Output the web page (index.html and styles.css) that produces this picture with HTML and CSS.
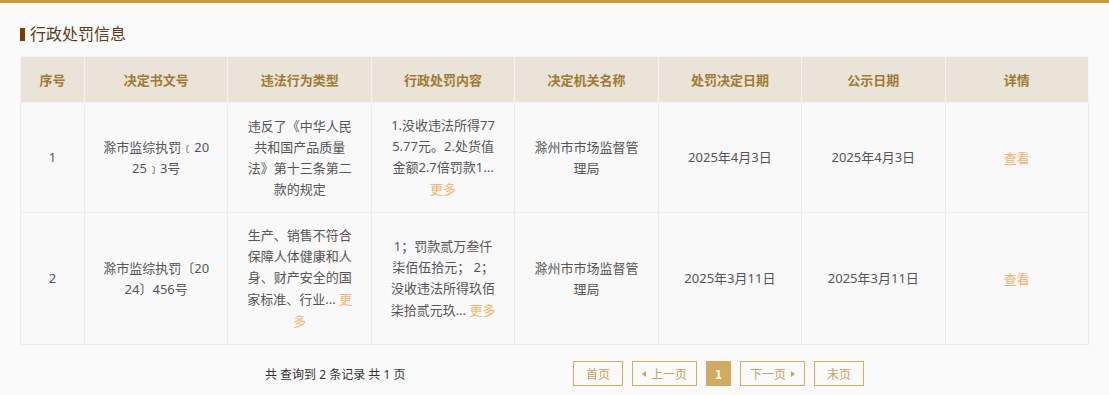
FILE: index.html
```html
<!DOCTYPE html>
<html lang="zh-CN">
<head>
<meta charset="utf-8">
<title>行政处罚信息</title>
<link rel="stylesheet" href="styles.css">
</head>
<body>
<div class="page">
  <h2 class="section-title"><span class="marker"></span>行政处罚信息</h2>
  <table class="grid">
    <colgroup>
      <col class="c-no">
      <col class="c-std"><col class="c-std"><col class="c-std"><col class="c-std"><col class="c-std"><col class="c-std"><col class="c-std">
    </colgroup>
    <thead>
      <tr>
        <th>序号</th>
        <th>决定书文号</th>
        <th>违法行为类型</th>
        <th>行政处罚内容</th>
        <th>决定机关名称</th>
        <th>处罚决定日期</th>
        <th>公示日期</th>
        <th>详情</th>
      </tr>
    </thead>
    <tbody>
      <tr>
        <td>1</td>
        <td>滁市监综执罚﹝2025﹞3号</td>
        <td>违反了《中华人民共和国产品质量法》第十三条第二款的规定</td>
        <td>1.没收违法所得775.77元。2.处货值金额2.7倍罚款1... <a class="more" href="#">更多</a></td>
        <td>滁州市市场监督管理局</td>
        <td>2025年4月3日</td>
        <td>2025年4月3日</td>
        <td><a class="more" href="#">查看</a></td>
      </tr>
      <tr>
        <td>2</td>
        <td>滁市监综执罚〔2024〕456号</td>
        <td>生产、销售不符合保障人体健康和人身、财产安全的国家标准、行业... <a class="more" href="#">更多</a></td>
        <td>1；罚款贰万叁仟柒佰伍拾元； 2；没收违法所得玖佰柒拾贰元玖... <a class="more" href="#">更多</a></td>
        <td>滁州市市场监督管理局</td>
        <td>2025年3月11日</td>
        <td>2025年3月11日</td>
        <td><a class="more" href="#">查看</a></td>
      </tr>
    </tbody>
  </table>
  <div class="pager">
    <div class="summary">共 查询到 2 条记录 共 1 页</div>
    <div class="pages">
      <a class="pbtn w49" href="#">首页</a>
      <a class="pbtn w65" href="#"><span class="tri-l"></span>上一页</a>
      <span class="pbtn current">1</span>
      <a class="pbtn w65" href="#">下一页<span class="tri-r"></span></a>
      <a class="pbtn w49" href="#">末页</a>
    </div>
  </div>
</div>
</body>
</html>
```

FILE: styles.css
```css
html, body {
  margin: 0;
  padding: 0;
  background: #fafafa;
}
body {
  font-family: "Noto Sans", "Noto Sans CJK SC", sans-serif;
  color: #555;
  border-top: 3px solid #c99b3f;
}
.page {
  padding: 0 20px;
}
.section-title {
  margin: 0;
  padding-top: 19px;
  height: 24px;
  line-height: 24px;
  font-size: 16px;
  font-weight: normal;
  color: #5a3a18;
  display: flex;
  align-items: center;
  gap: 5px;
  margin-bottom: 10px;
}
.marker {
  display: inline-block;
  width: 5px;
  height: 13px;
  background: #7a3c02;
}
.grid {
  width: 100%;
  border-collapse: collapse;
  table-layout: fixed;
  font-size: 13px;
}
.c-no { width: 64px; }
.grid th, .grid td {
  border: 1px solid #ebebeb;
  text-align: center;
  vertical-align: middle;
  line-height: 21px;
}
.grid th {
  background: #e9e3d8;
  color: #a07a32;
  font-weight: bold;
  padding: 12px 10px;
  border-color: #f3f3f3;
  font-family: "Noto Sans CJK SC", sans-serif;
}
.grid td {
  padding: 12px 18px;
  color: #555;
  background: #f9f9f9;
  word-break: break-all;
}
.more {
  color: #f7b26a;
  text-decoration: none;
  font-family: "Noto Sans CJK SC", sans-serif;
}
.pager {
  margin-top: 16px;
  display: flex;
  align-items: center;
  height: 25px;
}
.summary {
  margin-left: 245px;
  font-size: 12px;
  color: #333;
  width: 308px;
}
.pages {
  display: flex;
  gap: 9px;
  align-items: center;
}
.pbtn {
  box-sizing: border-box;
  height: 25px;
  border: 1px solid #d4ac62;
  color: #caa05a;
  font-size: 12px;
  text-decoration: none;
  display: flex;
  align-items: center;
  justify-content: center;
  gap: 5px;
  font-family: "Noto Sans CJK SC", sans-serif;
}
.w49 { width: 50px; }
.w65 { width: 65px; }
.current {
  width: 25px;
  background: #d3aa60;
  border-color: #d3aa60;
  color: #fff;
  font-weight: bold;
}
.tri-l, .tri-r {
  width: 0;
  height: 0;
  border-top: 3px solid transparent;
  border-bottom: 3px solid transparent;
}
.tri-l { border-right: 4px solid #caa05a; }
.tri-r { border-left: 4px solid #caa05a; }
```
